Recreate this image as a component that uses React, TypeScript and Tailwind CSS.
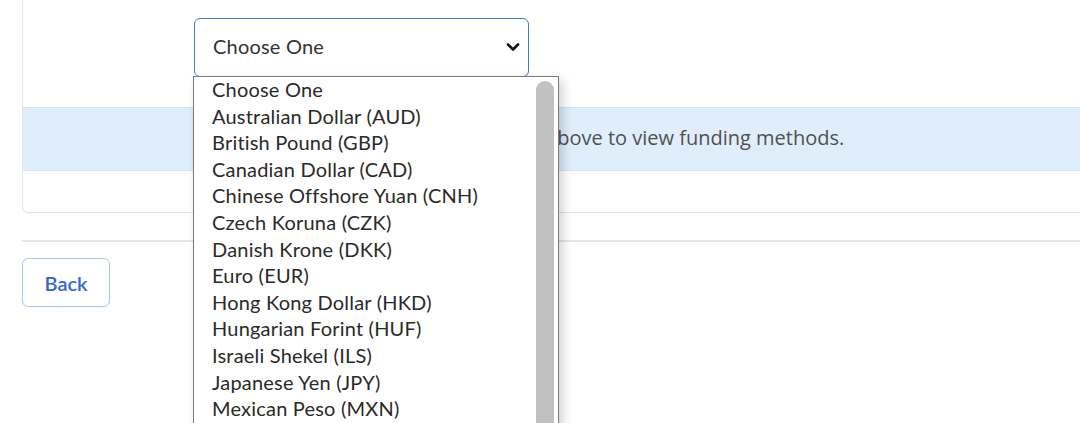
import React from "react";

const currencies = [
  "Choose One",
  "Australian Dollar (AUD)",
  "British Pound (GBP)",
  "Canadian Dollar (CAD)",
  "Chinese Offshore Yuan (CNH)",
  "Czech Koruna (CZK)",
  "Danish Krone (DKK)",
  "Euro (EUR)",
  "Hong Kong Dollar (HKD)",
  "Hungarian Forint (HUF)",
  "Israeli Shekel (ILS)",
  "Japanese Yen (JPY)",
  "Mexican Peso (MXN)",
  "New Zealand Dollar (NZD)",
  "Norwegian Krone (NOK)",
];

export default function App() {
  return (
    <div className="relative w-[1080px] h-[423px] overflow-hidden bg-white font-['Lato',sans-serif] text-[#333]">
      {/* Card */}
      <div className="ml-[22px] w-[1120px] h-[213px] border border-t-0 border-[#e3e3e3] rounded-b-[6px] pt-[18px]">
        <div className="relative ml-[171px] w-[335px]">
          <div className="flex items-center justify-between h-[59px] border-[1.5px] border-[#3a7bd5] rounded-[6px] pl-[18px] pr-[7px] text-[20px] tracking-[0.2px] text-[#333]">
            <span className="-mt-[4px]">Choose One</span>
            <svg width="14" height="10" viewBox="0 0 14 10" className="mr-[1px] -mt-[2px]">
              <path d="M2 2.5 L7 7.5 L12 2.5" fill="none" stroke="#111" strokeWidth="2.6" strokeLinecap="round" strokeLinejoin="round" />
            </svg>
          </div>
          {/* Dropdown list */}
          <div className="absolute z-10 left-[-1px] top-[58px] w-[366px] h-[400px] bg-white border border-[#7b7b7b] shadow-[4px_4px_10px_rgba(0,0,0,0.18)] flex">
            <ul className="flex-1 -mt-[1px]">
              {currencies.map((c) => (
                <li key={c} className="pl-[18px] h-[26.6px] leading-[26.6px] text-[20px] tracking-[0.2px] text-[#2a2a2a] whitespace-nowrap">
                  {c}
                </li>
              ))}
            </ul>
            <div className="w-[24px] pt-[4px] pr-[4px] pl-[2px]">
              <div className="w-[18px] h-[420px] rounded-full bg-[#c1c1c1]" />
            </div>
          </div>
        </div>
        <div className="mt-[30px] h-[64px] bg-[#dfeefa] border-y border-[#cfe3f6] flex items-center pl-[296px] pb-[3px] text-[20px] text-[#505050] font-['Open_Sans',sans-serif]">
          Please select a currency above to view funding methods.
        </div>
      </div>
      <div className="ml-[22px] mt-[27px] h-[2px] bg-[#e6e6e6]" />
      <div className="ml-[22px] mt-[16px]">
        <button className="w-[88px] h-[49px] border border-[#a9c5ee] rounded-[6px] text-[20px] font-semibold text-[#2f69cf] bg-white">
          Back
        </button>
      </div>
    </div>
  );
}
